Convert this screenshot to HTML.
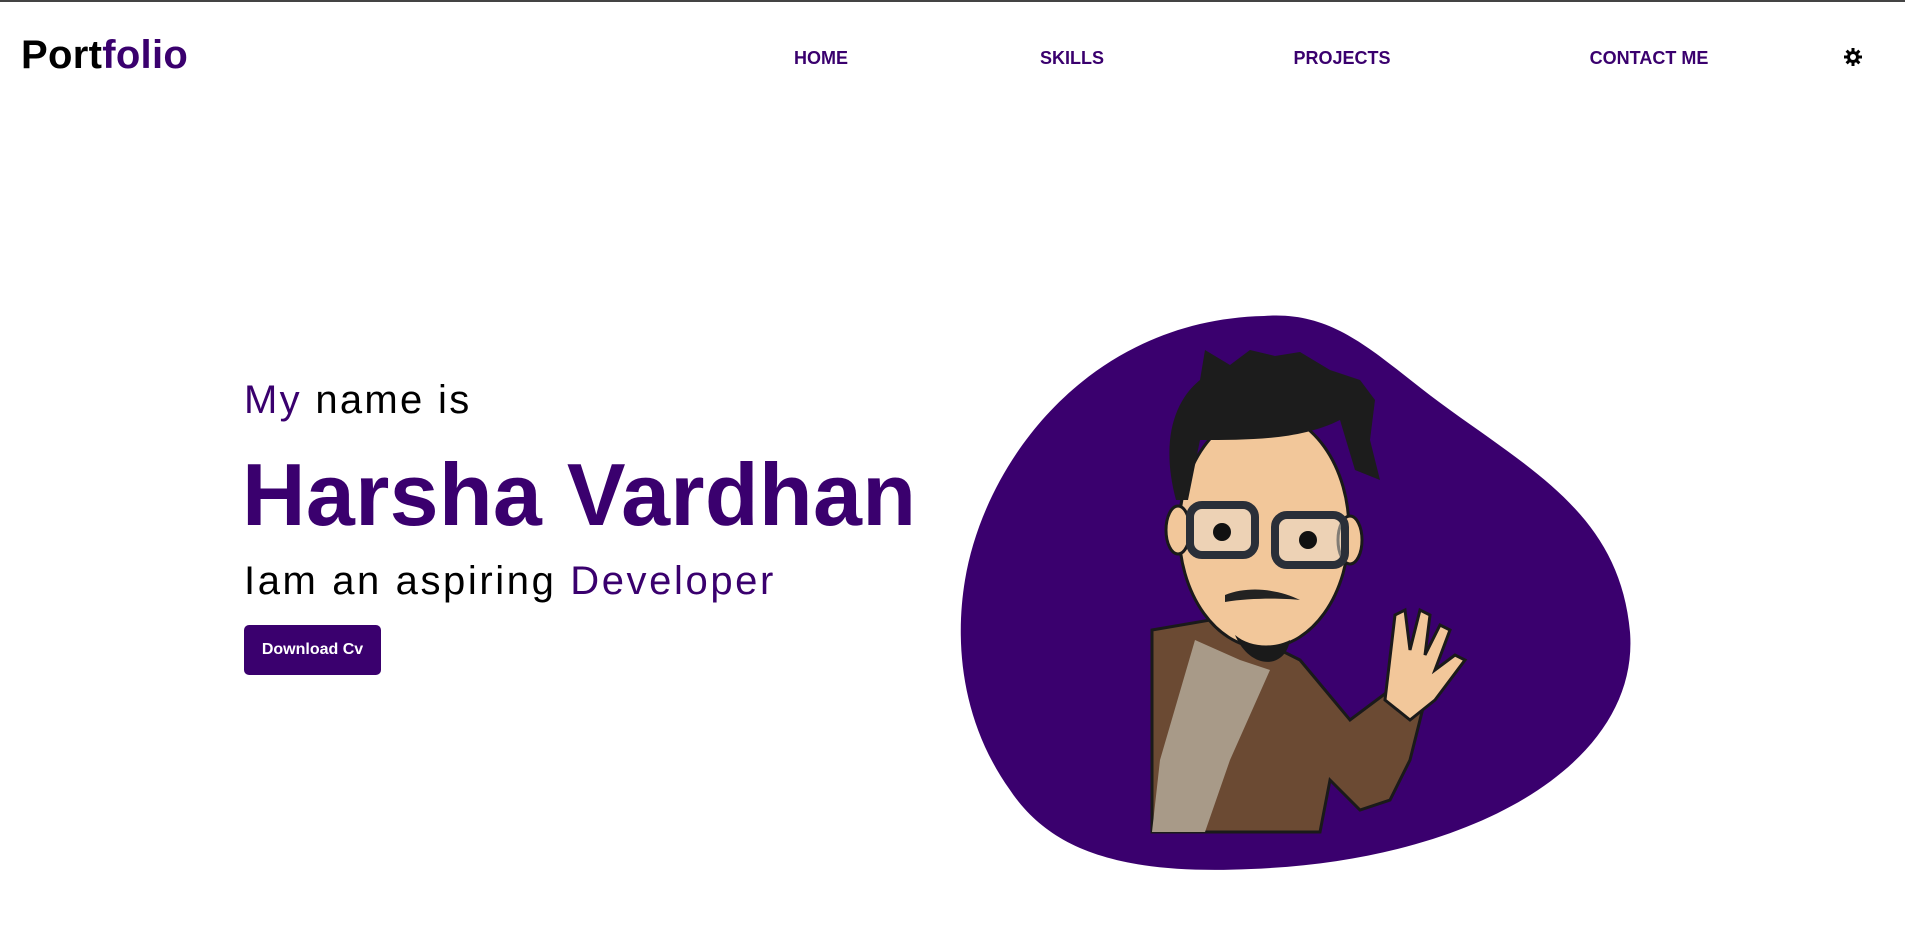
<!DOCTYPE html>
<html><head><meta charset="utf-8"><style>
*{margin:0;padding:0;box-sizing:border-box}
html,body{width:1905px;height:928px;overflow:hidden;background:#fff;font-family:"Liberation Sans",sans-serif}
.topline{position:absolute;left:0;top:0;width:1905px;height:2px;background:#444}
.logo{position:absolute;left:21px;top:33px;font-size:40px;font-weight:700;color:#000;letter-spacing:0.3px}
.logo span{color:#3a006e}
.nav a{position:absolute;top:48px;font-size:18px;font-weight:700;color:#3a006e;text-decoration:none;transform:translateX(-50%)}
.t1{position:absolute;left:244px;top:378px;font-size:40px;color:#000;letter-spacing:2.3px}
.t2{position:absolute;left:242px;top:444px;font-size:88px;font-weight:700;color:#3a006e;letter-spacing:0.3px}
.t3{position:absolute;left:244px;top:559px;font-size:40px;color:#000;letter-spacing:2.6px}
.p{color:#3a006e}
.btn{position:absolute;left:244px;top:625px;width:137px;height:50px;background:#3a006e;color:#fff;border-radius:5px;font-size:16px;font-weight:700;display:flex;align-items:center;justify-content:center}
svg{position:absolute;left:0;top:0}
</style></head><body>
<div class="topline"></div>
<div class="logo">Port<span>folio</span></div>
<div class="nav">
<a style="left:821px">HOME</a>
<a style="left:1072px">SKILLS</a>
<a style="left:1342px">PROJECTS</a>
<a style="left:1649px">CONTACT ME</a>
</div>
<div class="t1"><span class="p">My</span> name is</div>
<div class="t2">Harsha Vardhan</div>
<div class="t3">Iam an aspiring <span class="p">Developer</span></div>
<div class="btn">Download Cv</div>
<svg width="1905" height="928" viewBox="0 0 1905 928">
<g transform="translate(1853,57)">
<circle r="6" fill="#000"/>
<g fill="#000"><rect x="-1.5" y="-9" width="3" height="18"/><rect x="-9" y="-1.5" width="18" height="3"/>
<rect x="-1.5" y="-9" width="3" height="18" transform="rotate(45)"/><rect x="-1.5" y="-9" width="3" height="18" transform="rotate(-45)"/></g>
<circle r="3" fill="#fff"/>
</g>
<path d="M1264,316 C1340,310 1380,360 1450,410 C1540,475 1620,520 1630,632 C1640,760 1480,860 1251,869 C1120,875 1050,850 1010,790 C960,720 955,640 965,580 C985,460 1090,320 1264,316 Z" fill="#3a006e"/>
<path d="M1152,630 L1210,620 L1260,640 L1300,660 L1350,720 L1390,690 L1430,680 L1410,760 L1390,800 L1360,810 L1330,780 L1320,832 L1152,832 Z" fill="#6b4a33" stroke="#1a1a1a" stroke-width="3"/>
<path d="M1195,640 L1240,660 L1270,670 L1230,760 L1205,832 L1152,832 L1160,760 Z" fill="#a89a88"/>
<path d="M1385,700 L1395,615 L1405,610 L1410,650 L1420,610 L1430,615 L1425,655 L1440,625 L1450,630 L1435,670 L1455,655 L1465,660 L1435,700 L1410,720 Z" fill="#f2c79a" stroke="#1a1a1a" stroke-width="3"/>
<ellipse cx="1264" cy="530" rx="85" ry="118" fill="#f2c79a" stroke="#1a1a1a" stroke-width="3"/>
<ellipse cx="1178" cy="530" rx="12" ry="24" fill="#f2c79a" stroke="#1a1a1a" stroke-width="3"/>
<ellipse cx="1350" cy="540" rx="12" ry="24" fill="#f2c79a" stroke="#1a1a1a" stroke-width="3"/>
<path d="M1176,500 C1160,440 1175,400 1200,380 L1205,350 L1230,365 L1250,350 L1275,356 L1300,352 L1330,370 L1360,380 L1375,400 L1370,440 L1380,480 L1355,470 L1340,420 C1300,440 1250,440 1200,440 L1188,500 Z" fill="#1c1c1c"/>
<rect x="1190" y="505" width="65" height="50" rx="12" fill="#e8ddd0" fill-opacity="0.5" stroke="#2a2f38" stroke-width="8"/>
<rect x="1275" y="515" width="70" height="50" rx="12" fill="#e8ddd0" fill-opacity="0.5" stroke="#2a2f38" stroke-width="8"/>
<circle cx="1222" cy="532" r="9" fill="#111"/>
<circle cx="1308" cy="540" r="9" fill="#111"/>
<path d="M1225,595 C1250,585 1280,590 1300,600 C1280,598 1250,598 1225,602 Z" fill="#222"/>
<path d="M1235,635 C1250,670 1285,670 1290,640 C1275,648 1250,648 1235,635 Z" fill="#1a1a1a"/>
</svg>
</body></html>
